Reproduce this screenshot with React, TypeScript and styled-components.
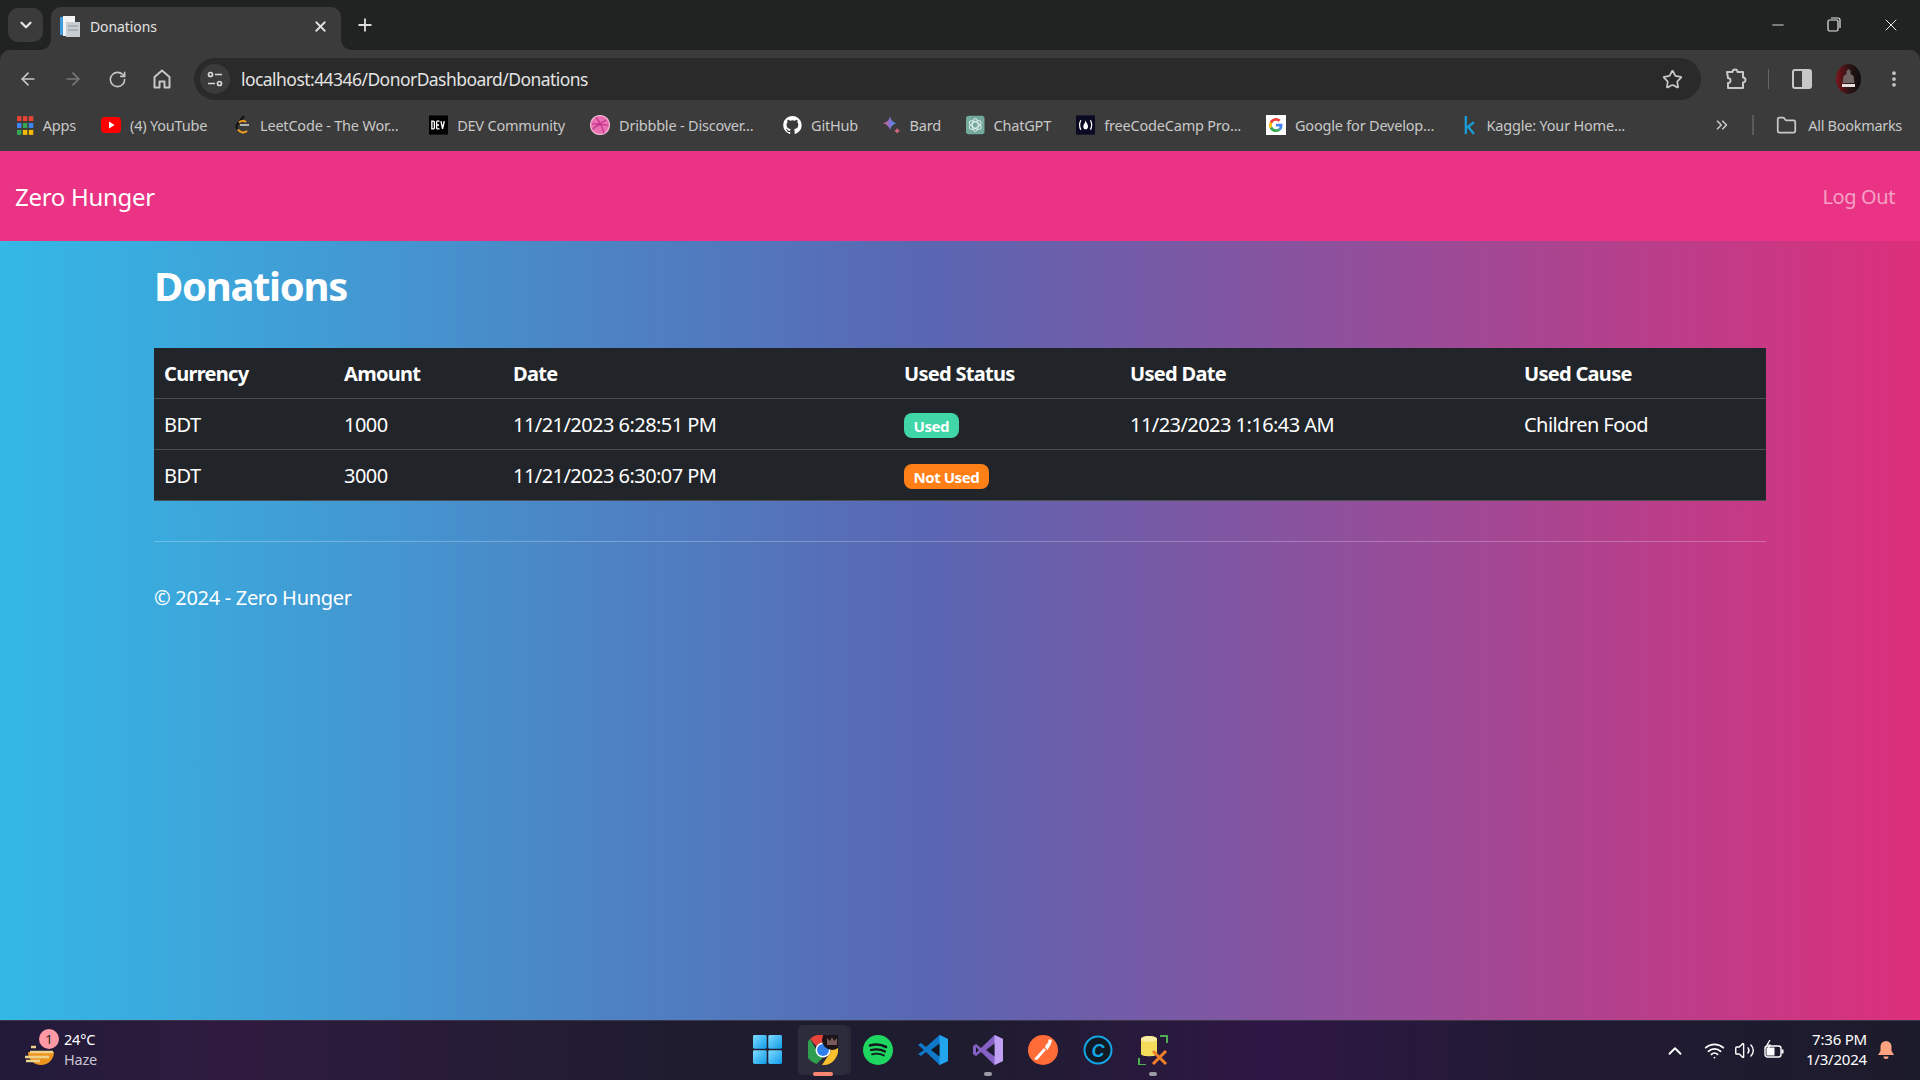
import React from 'react'
import styled, { createGlobalStyle } from 'styled-components'
import {
  ArrowLeft,
  ArrowRight,
  ChevronDown,
  ChevronsRight,
  ChevronUp,
  EllipsisVertical,
  Folder,
  Minus,
  Plus,
  RotateCw,
  Star,
  Volume2,
  Wifi,
  X,
} from 'lucide-react'

const UI_FONT = `'Noto Sans', 'Open Sans', 'Liberation Sans', sans-serif`

const GlobalStyle = createGlobalStyle`
  html, body {
    margin: 0;
    padding: 0;
    background: #212322;
    font-family: ${UI_FONT};
  }
  * { box-sizing: border-box; }
`

const Page = styled.div`
  display: flex;
  flex-direction: column;
  width: 1920px;
  height: 1080px;
  overflow: hidden;
`

/* browser chrome */
const TabStrip = styled.div`
  display: flex;
  align-items: flex-end;
  height: 50px;
  padding-left: 8px;
  background: #212322;
  flex-shrink: 0;
`

const TabSearch = styled.div`
  display: flex;
  align-items: center;
  justify-content: center;
  width: 35px;
  height: 34px;
  margin: 0 8px 8px 0;
  border-radius: 10px;
  background: #3b3b3b;
  color: #e6e6e6;
`

const Tab = styled.div`
  position: relative;
  display: flex;
  align-items: center;
  width: 290px;
  height: 43px;
  padding: 0 12px 4px 9px;
  border-radius: 10px 10px 0 0;
  background: #3b3b3b;
  color: #e3e3e3;
  font-size: 14px;
  letter-spacing: -0.1px;

  &::before,
  &::after {
    content: '';
    position: absolute;
    bottom: 0;
    width: 10px;
    height: 10px;
  }
  &::before {
    left: -10px;
    background: radial-gradient(circle at 0 0, transparent 9.5px, #3b3b3b 10px);
  }
  &::after {
    right: -10px;
    background: radial-gradient(circle at 100% 0, transparent 9.5px, #3b3b3b 10px);
  }
`

const TabTitle = styled.span`
  flex: 1;
  margin-left: 10px;
`

const NewTab = styled.div`
  display: flex;
  align-items: center;
  margin: 0 0 11px 14px;
  height: 28px;
  color: #dedede;
`

const WindowControls = styled.div`
  display: flex;
  align-items: center;
  gap: 38px;
  margin: 0 19px 13px auto;
  height: 24px;
  color: #e8e8e8;
`

const Toolbar = styled.div`
  display: flex;
  align-items: flex-end;
  height: 50px;
  padding-left: 18px;
  background: #3b3b3b;
  border-radius: 10px 10px 0 0;
  flex-shrink: 0;
  color: #c7c7c7;
`

const NavButtons = styled.div`
  display: flex;
  align-items: center;
  gap: 25px;
  height: 42px;
`

const Omnibox = styled.div`
  display: flex;
  align-items: center;
  width: 1507px;
  height: 42px;
  margin-left: 22px;
  padding: 0 18px 0 6px;
  border-radius: 21px;
  background: #2a2a2a;
`

const SiteInfo = styled.div`
  display: flex;
  align-items: center;
  justify-content: center;
  width: 30px;
  height: 30px;
  border-radius: 50%;
  background: #3b3b3b;
`

const Url = styled.span`
  flex: 1;
  margin-left: 11px;
  color: #e3e3e3;
  font-size: 17.5px;
  letter-spacing: -0.55px;
`

const ToolbarEnd = styled.div`
  display: flex;
  align-items: center;
  height: 42px;
  margin-left: 24px;
`

const ToolSep = styled.div`
  width: 1px;
  height: 20px;
  margin: 0 23px 0 21px;
  background: #666;
`

const AvatarSlot = styled.div`
  display: flex;
  margin: 0 23px 0 24px;
`

const BookmarksBar = styled.div`
  display: flex;
  align-items: center;
  height: 51px;
  padding: 0 0 1px 17px;
  background: #3b3b3b;
  flex-shrink: 0;
`

const Bookmark = styled.div<{ $w: number }>`
  display: flex;
  align-items: center;
  gap: 9px;
  width: ${({ $w }) => $w}px;
  flex-shrink: 0;
  margin-right: 25px;
  color: #c8c8c8;
  font-size: 14.5px;
  letter-spacing: -0.2px;
  white-space: nowrap;
`

const BarEnd = styled.div`
  display: flex;
  align-items: center;
  gap: 11px;
  margin-left: auto;
  padding-right: 18px;
  color: #c8c8c8;
  font-size: 14.5px;
  letter-spacing: -0.3px;
`

const BarSep = styled.div`
  width: 2px;
  height: 20px;
  margin: 0 11px 0 10px;
  background: #5a5a5a;
`

/* site */
const SiteNav = styled.nav`
  display: flex;
  align-items: center;
  justify-content: space-between;
  height: 90px;
  padding: 0 25px 0 15px;
  background: #ea3384;
  flex-shrink: 0;
`

const Brand = styled.a`
  color: #fff;
  font-size: 24px;
  letter-spacing: -0.3px;
`

const NavLink = styled.a`
  color: rgba(255, 255, 255, 0.55);
  font-size: 20px;
  letter-spacing: -0.4px;
`

const Main = styled.main`
  flex: 1;
  padding: 0 154px;
  background: linear-gradient(to right, #34b8e6 0%, #5a66b2 48.5%, #8f509c 70%, #dd2f7b 100%);
  color: #fff;
`

const Title = styled.h1`
  margin: 0;
  padding-top: 15px;
  height: 107px;
  font-size: 40px;
  line-height: 60px;
  font-weight: 700;
  letter-spacing: -1.3px;
`

const Table = styled.table`
  width: 100%;
  table-layout: fixed;
  border-collapse: separate;
  border-spacing: 0;
  background: #212529;
  font-size: 20px;
  letter-spacing: -0.55px;
`

const Th = styled.th<{ $w: number }>`
  width: ${({ $w }) => $w}px;
  height: 51px;
  padding: 0 10px;
  text-align: left;
  font-weight: 700;
  letter-spacing: -0.7px;
  border-bottom: 1px solid #4c4f52;
`

const Td = styled.td`
  height: 51px;
  padding: 0 10px;
  border-bottom: 1px solid #4c4f52;
`

const Badge = styled.span<{ $tone: 'used' | 'free' }>`
  display: inline-flex;
  align-items: center;
  height: 25px;
  padding: 0 9.5px;
  margin-top: 3px;
  border-radius: 8px;
  background: ${({ $tone }) => ($tone === 'used' ? '#40d6a6' : '#ff7f17')};
  color: #fff;
  font-size: 15px;
  font-weight: 700;
  letter-spacing: -0.45px;
`

const Rule = styled.hr`
  margin: 40px 0 0;
  border: 0;
  border-top: 1px solid rgba(255, 255, 255, 0.25);
`

const Footer = styled.footer`
  margin-top: 41px;
  font-size: 20px;
  line-height: 30px;
  letter-spacing: -0.3px;
`

/* taskbar */
const Taskbar = styled.div`
  display: grid;
  grid-template-columns: 1fr auto 1fr;
  align-items: center;
  height: 60px;
  flex-shrink: 0;
  border-top: 1px solid #3b3848;
  background: linear-gradient(90deg, #211a38 0%, #2f1b3f 12%, #1f1c30 35%, #1e1c2e 50%, #2f1745 66%, #211a33 80%, #1c1b2b 100%);
  color: #fff;
`

const Weather = styled.div`
  display: flex;
  align-items: center;
  padding-left: 25px;
  gap: 9px;
`

const WeatherIcon = styled.div`
  position: relative;
  width: 30px;
  height: 36px;
`

const WeatherBadge = styled.span`
  position: absolute;
  top: -4px;
  right: -4px;
  width: 20px;
  height: 20px;
  border-radius: 50%;
  background: #ff99a4;
  color: #222;
  font-size: 13px;
  line-height: 20px;
  text-align: center;
`

const WeatherText = styled.div`
  display: flex;
  flex-direction: column;
  padding-bottom: 4px;
  font-size: 14.5px;
  line-height: 20px;
  letter-spacing: -0.2px;
`

const Muted = styled.span`
  color: #c9c5d0;
`

const Apps = styled.div`
  display: flex;
  align-items: center;
  gap: 25px;
  padding-bottom: 2px;
`

const AppSlot = styled.div<{ $active?: boolean }>`
  position: relative;
  display: flex;
  align-items: center;
  justify-content: center;
  width: 30px;
  height: 50px;
  &::before {
    content: '';
    display: ${({ $active }) => ($active ? 'block' : 'none')};
    position: absolute;
    inset: 0 -10px;
    border-radius: 5px;
    background: #2d2c3c;
    box-shadow: 4px 0 0 -1px #292837;
  }
  svg { position: relative; }
`

const RunDot = styled.span<{ $active?: boolean }>`
  position: absolute;
  bottom: -1px;
  left: 50%;
  width: ${({ $active }) => ($active ? 20 : 8)}px;
  height: 4px;
  transform: translateX(-50%);
  border-radius: 2px;
  background: ${({ $active }) => ($active ? '#f98673' : '#9d9ba5')};
`

const Tray = styled.div`
  display: flex;
  align-items: center;
  justify-content: flex-end;
  padding-right: 26px;
`

const TrayIcons = styled.div`
  display: flex;
  align-items: center;
  gap: 9px;
  margin-right: 22px;
`

const TrayChevron = styled.span`
  display: flex;
  margin-right: 9px;
`

const Clock = styled.div`
  display: flex;
  flex-direction: column;
  align-items: flex-end;
  margin-right: 11px;
  padding-bottom: 4px;
  font-size: 15px;
  line-height: 20px;
  letter-spacing: -0.2px;
`

const HomeIcon = () => (
  <svg width="20" height="22" viewBox="0 0 20 22" fill="none" stroke="currentColor" strokeWidth="2">
    <path d="M2.5 9 10 2.5 17.5 9v10.5h-5v-6h-5v6h-5z" strokeLinejoin="round" />
  </svg>
)

const TuneIcon = () => (
  <svg width="18" height="18" viewBox="0 0 18 18" fill="none" stroke="#d8d8d8" strokeWidth="1.7">
    <circle cx="4.5" cy="4.5" r="2" />
    <path d="M9 4.5h7M2 13.5h7" />
    <circle cx="13.5" cy="13.5" r="2" />
  </svg>
)

const PuzzleIcon = () => (
  <svg width="22" height="24" viewBox="0 0 22 24" fill="none" stroke="#c7c7c7" strokeWidth="2" strokeLinejoin="round">
    <path d="M2 5h5.5a2.5 2.5 0 0 1 5 0H18v5.5a2.5 2.5 0 0 1 0 5V21H3v-5a2.5 2.5 0 0 0 0-5z" />
  </svg>
)

const SidePanelIcon = () => (
  <svg width="20" height="22" viewBox="0 0 20 22">
    <rect x="1" y="2" width="18" height="18" rx="2" fill="none" stroke="#c7c7c7" strokeWidth="2" />
    <rect x="10" y="2" width="9" height="18" fill="#c7c7c7" />
  </svg>
)

const AvatarIcon = () => (
  <svg width="25" height="30" viewBox="0 0 25 30">
    <defs>
      <linearGradient id="avatar" x1="0" x2="1">
        <stop offset="0" stopColor="#7a1418" />
        <stop offset="0.55" stopColor="#2a1416" />
        <stop offset="1" stopColor="#0f0c0c" />
      </linearGradient>
    </defs>
    <ellipse cx="12.5" cy="15" rx="12.5" ry="15" fill="url(#avatar)" />
    <path d="M12.500 5l2 2v3l3 2 1 7h-12l1-7 3-2V7z" fill="#6f6462" />
    <rect x="6" y="20" width="13" height="3" fill="#e4e0dc" />
  </svg>
)

const DocFavicon = () => (
  <svg width="20" height="22" viewBox="0 0 20 22">
    <rect x="0" y="1" width="4" height="18" fill="#3f9bdc" />
    <rect x="3" y="0" width="12" height="20" fill="#f3f3f3" />
    <rect x="6" y="6" width="14" height="15" fill="#c9ced3" />
    <path d="M8 10h10M8 14h10" stroke="#8d949b" strokeWidth="1" />
  </svg>
)

const AppsGrid = () => (
  <svg width="17" height="19" viewBox="0 0 17 19">
    {['#ea4335', '#ea4335', '#ea4335', '#4285f4', '#34a853', '#4285f4', '#34a853', '#fbbc04', '#fbbc04'].map((c, i) => (
      <rect key={i} x={(i % 3) * 6} y={Math.floor(i / 3) * 7} width="4.5" height="5" fill={c} />
    ))}
  </svg>
)

const YoutubeIcon = () => (
  <svg width="20" height="16" viewBox="0 0 20 16">
    <rect width="20" height="16" rx="4" fill="#f00" />
    <path d="M8 4.5v7l5.5-3.5z" fill="#fff" />
  </svg>
)

const LeetcodeIcon = () => (
  <svg width="16" height="20" viewBox="0 0 16 20" fill="none" strokeWidth="2">
    <path d="M9 1 2.5 9a3.5 3.5 0 0 0 0 5" stroke="#111" />
    <path d="M5 10h9" stroke="#b3b3b3" />
    <path d="M3 14.5c2.5 3.5 6 4 9 1.5" stroke="#f89f1b" />
    <path d="M4 7.5c2-2 5-2 7-.5" stroke="#f89f1b" />
  </svg>
)

const DevIcon = () => (
  <svg width="20" height="20" viewBox="0 0 20 20">
    <rect width="20" height="20" fill="#000" />
    <path d="M3 6h1.6q1 0 1 1v6q0 1-1 1H3zM8 6h3M8 10h2.5M8 14h3M8 6v8M12.5 6l1.7 8 1.8-8" fill="none" stroke="#fff" strokeWidth="1.4" />
  </svg>
)

const DribbbleIcon = () => (
  <svg width="20" height="20" viewBox="0 0 20 20" fill="none" stroke="#c2358b" strokeWidth="1.2">
    <circle cx="10" cy="10" r="9.5" fill="#ea6fb0" stroke="#f3b6d6" />
    <path d="M6 2.5c3.5 4 6.5 10 8 16M2 9c5 .5 10-.5 14-4M2.5 14.5c3-4 9-6 16-4" />
  </svg>
)

const GithubIcon = () => (
  <svg width="20" height="20" viewBox="0 0 24 24" fill="#fff">
    <path d="M12 .5a11.7 11.7 0 0 0-3.7 22.8c.6.1.8-.3.8-.6v-2c-3.300.7-4-1.600-4-1.600-.5-1.300-1.300-1.700-1.300-1.700-1-.7.1-.7.1-.7 1.200.1 1.800 1.200 1.800 1.200 1 1.800 2.700 1.300 3.400 1 .1-.8.4-1.300.8-1.600-2.600-.3-5.400-1.300-5.400-5.800 0-1.300.5-2.300 1.200-3.100-.1-.3-.5-1.500.1-3.100 0 0 1-.3 3.200 1.200a11 11 0 0 1 5.800 0c2.200-1.500 3.200-1.200 3.200-1.200.6 1.600.2 2.800.1 3.100.8.8 1.200 1.900 1.200 3.100 0 4.500-2.700 5.500-5.400 5.800.4.400.8 1.100.8 2.200v3.200c0 .3.2.7.8.6A11.700 11.700 0 0 0 12 .5z" />
  </svg>
)

const BardIcon = () => (
  <svg width="20" height="20" viewBox="0 0 20 20">
    <defs>
      <linearGradient id="bard" x1="0" x2="1">
        <stop offset="0" stopColor="#e0606a" />
        <stop offset="0.5" stopColor="#8a6fd0" />
        <stop offset="1" stopColor="#3f9be8" />
      </linearGradient>
    </defs>
    <path d="M8 0q1 6 7 8-6 2-7 8-1-6-8-8 7-2 8-8z" fill="url(#bard)" />
    <path d="M16 13q.4 2.600 3.500 3.500-3.100.9-3.500 3.500-.4-2.600-3.500-3.500 3.100-.9 3.500-3.500z" fill="#d9647f" />
  </svg>
)

const ChatGptIcon = () => (
  <svg width="20" height="20" viewBox="0 0 20 20">
    <rect width="20" height="20" rx="3" fill="#74aa9c" />
    <g fill="none" stroke="#e8f3f0" strokeWidth="1">
      <ellipse cx="10" cy="10" rx="3.200" ry="7" />
      <ellipse cx="10" cy="10" rx="3.200" ry="7" transform="rotate(60 10 10)" />
      <ellipse cx="10" cy="10" rx="3.200" ry="7" transform="rotate(120 10 10)" />
    </g>
  </svg>
)

const FccIcon = () => (
  <svg width="20" height="20" viewBox="0 0 20 20" fill="none" stroke="#fff" strokeWidth="1.300">
    <rect width="20" height="20" fill="#0a0a23" stroke="none" />
    <path d="M5 5q-2.500 5 0 10M15 5q2.500 5 0 10" />
    <path d="M10 5c.5 2.500 2.500 4 2.500 6.500 0 2-1.500 3-2.500 3s-2.500-1-2.500-3c0-2 2-3.500 2.500-6.500z" fill="#fff" stroke="none" />
  </svg>
)

const GoogleIcon = () => (
  <svg width="20" height="20" viewBox="0 0 20 20">
    <rect width="20" height="20" fill="#fff" />
    <path d="M16.500 10.200c0-.5 0-1-.1-1.400H10v2.700h3.700a3.200 3.200 0 0 1-1.400 2.100l2.200 1.700c1.300-1.200 2-3 2-5.100z" fill="#4285f4" />
    <path d="M10 17c1.900 0 3.400-.6 4.500-1.700l-2.200-1.700c-.6.400-1.400.7-2.300.7-1.800 0-3.300-1.200-3.900-2.800l-2.300 1.800A7 7 0 0 0 10 17z" fill="#34a853" />
    <path d="M6.100 11.500a4.200 4.200 0 0 1 0-2.900L3.800 6.800a7 7 0 0 0 0 6.500z" fill="#fbbc04" />
    <path d="M10 5.800c1 0 1.900.4 2.600 1l2-2A7 7 0 0 0 3.800 6.800l2.300 1.800C6.700 7 8.200 5.800 10 5.800z" fill="#ea4335" />
  </svg>
)

const KaggleIcon = () => (
  <svg width="15" height="20" viewBox="0 0 15 20" fill="none" stroke="#1b9bd1" strokeWidth="2.600">
    <path d="M2 0v20M11 7l-8 6M4 11l7 9" />
  </svg>
)

const WinIcon = () => (
  <svg width="29" height="29" viewBox="0 0 30 30">
    <defs>
      <linearGradient id="win" x1="0" y1="0" x2="1" y2="1">
        <stop offset="0" stopColor="#7fdcff" />
        <stop offset="1" stopColor="#0f9be8" />
      </linearGradient>
    </defs>
    <rect x="0" y="0" width="14.200" height="14.200" rx="1.500" fill="url(#win)" />
    <rect x="15.800" y="0" width="14.200" height="14.200" rx="1.500" fill="url(#win)" />
    <rect x="0" y="15.800" width="14.200" height="14.200" rx="1.500" fill="url(#win)" />
    <rect x="15.800" y="15.800" width="14.200" height="14.200" rx="1.500" fill="url(#win)" />
  </svg>
)

const ChromeIcon = () => (
  <svg width="30" height="30" viewBox="0 0 30 30">
    <path d="M15 0a15 15 0 0 1 13 7.500H15a7.500 7.500 0 0 0-6.500 3.750L2 3.900A15 15 0 0 1 15 0z" fill="#e8433a" />
    <path d="M2 3.900l6.500 11.100A7.500 7.500 0 0 0 15 22.500L8.500 29A15 15 0 0 1 2 3.900z" fill="#2f9e4f" />
    <path d="M28 7.500A15 15 0 0 1 14 30l7.500-11.250A7.500 7.500 0 0 0 21.500 11z" fill="#fbc02d" />
    <circle cx="15" cy="15" r="7.500" fill="#fff" />
    <circle cx="15" cy="15" r="6" fill="#2f80ed" />
    <circle cx="24" cy="5" r="10" fill="#1b1416" />
    <path d="M19 10V3l3 3 2-4 2 4 3-3v7z" fill="#7a5a5a" />
  </svg>
)

const SpotifyIcon = () => (
  <svg width="30" height="30" viewBox="0 0 30 30" fill="none" stroke="#14151f" strokeLinecap="round">
    <circle cx="15" cy="15" r="15" fill="#1ed760" stroke="none" />
    <path d="M7 10.500c5.500-1.500 11.500-1 16 1.500" strokeWidth="2.600" />
    <path d="M8 15c5-1.200 10-.8 14 1.500" strokeWidth="2.200" />
    <path d="M9 19.300c4-1 8.500-.7 12 1.200" strokeWidth="1.800" />
  </svg>
)

const VsCodeIcon = () => (
  <svg width="30" height="30" viewBox="0 0 30 30">
    <path d="M21.500 0 30 4v22l-8.500 4L8 17l-5 4-3-2 6-4-6-5 3-2 5 4z" fill="#0f78c8" />
    <path d="M21.500 0 30 4v22l-8.500 4z" fill="#23a5ee" />
    <path d="M21.500 8.500v13L13 15z" fill="#14151f" />
  </svg>
)

const VisualStudioIcon = () => (
  <svg width="30" height="30" viewBox="0 0 30 30">
    <path d="M21.500 0 30 4v22l-8.500 4L8 17l-5 4-3-2V11l3-2 5 4z" fill="#8661c5" />
    <path d="M21.500 0 30 4v22l-8.500 4z" fill="#c0a0f2" />
    <path d="M21.500 8.500v13L13 15zM3 12v6l3-3z" fill="#1d1b2d" />
  </svg>
)

const PostmanIcon = () => (
  <svg width="30" height="30" viewBox="0 0 30 30">
    <circle cx="15" cy="15" r="15" fill="#ff6c37" />
    <path d="M6 24 16 13l2 2-9 10zM17 12.500c0-2 2-4 3-5l2-2 1.500 1.500-1 3-3 5z" fill="#fff" />
    <circle cx="22" cy="6" r="1.800" fill="#fff" />
  </svg>
)

const CCleanerIcon = () => (
  <svg width="30" height="30" viewBox="0 0 30 30">
    <circle cx="15" cy="15" r="13.500" fill="#111a24" stroke="#14a5e6" strokeWidth="2" />
    <text x="15" y="21.500" textAnchor="middle" fill="#14a5e6" fontSize="18" fontWeight="700" fontStyle="italic" fontFamily="'Liberation Sans', sans-serif">C</text>
  </svg>
)

const DbToolIcon = () => (
  <svg width="30" height="30" viewBox="0 0 30 30" fill="none">
    <path d="M22 1h7v7M1 23v7h7" stroke="#4caf50" strokeWidth="2" />
    <path d="M3 4c0-4 16-4 16 0v15c0 3-16 3-16 0z" fill="#f5dc5a" />
    <ellipse cx="11" cy="4" rx="8" ry="3" fill="#f9eda3" />
    <path d="M15 16l13 13M28 16 15 29" stroke="#f07f2b" strokeWidth="3" />
  </svg>
)

const WeatherGlyph = () => (
  <svg width="30" height="36" viewBox="0 0 30 36">
    <path d="M4 20a13 13 0 0 0 26 0z" fill="#ef9320" transform="translate(-1 -1)" />
    <path d="M6 14h5M5 19h23M0 24h24M1 28h14" stroke="#eed38a" strokeWidth="2.500" />
  </svg>
)

const BatteryIcon = () => (
  <svg width="20" height="22" viewBox="0 0 20 22" fill="none" stroke="#fff" strokeWidth="1.400">
    <rect x="1" y="6" width="16" height="11" rx="2.500" />
    <rect x="2.500" y="7.500" width="8" height="8" fill="#fff" stroke="none" />
    <path d="M18.500 9.500v4" strokeWidth="2" />
    <path d="M6 0 3 5h3l-2 4" strokeWidth="1.200" />
  </svg>
)

const BellIcon = () => (
  <svg width="16" height="20" viewBox="0 0 16 20" fill="#ffa27f">
    <path d="M8 0a5.500 5.500 0 0 1 5.500 5.500V10L16 14H0l2.500-4V5.500A5.500 5.500 0 0 1 8 0z" />
    <path d="M5.500 15.500h5a2.500 2.500 0 0 1-5 0z" />
  </svg>
)

const bookmarks: { label: string; w: number; icon: React.ReactNode }[] = [
  { label: 'Apps', w: 59, icon: <AppsGrid /> },
  { label: '(4) YouTube', w: 109, icon: <YoutubeIcon /> },
  { label: 'LeetCode - The Wor...', w: 169, icon: <LeetcodeIcon /> },
  { label: 'DEV Community', w: 136, icon: <DevIcon /> },
  { label: 'Dribbble - Discover...', w: 168, icon: <DribbbleIcon /> },
  { label: 'GitHub', w: 75, icon: <GithubIcon /> },
  { label: 'Bard', w: 58, icon: <BardIcon /> },
  { label: 'ChatGPT', w: 85, icon: <ChatGptIcon /> },
  { label: 'freeCodeCamp Pro...', w: 165, icon: <FccIcon /> },
  { label: 'Google for Develop...', w: 173, icon: <GoogleIcon /> },
  { label: 'Kaggle: Your Home...', w: 161, icon: <KaggleIcon /> },
]

const columns = [
  { title: 'Currency', w: 180 },
  { title: 'Amount', w: 169 },
  { title: 'Date', w: 391 },
  { title: 'Used Status', w: 226 },
  { title: 'Used Date', w: 394 },
  { title: 'Used Cause', w: 252 },
]

const donations = [
  { currency: 'BDT', amount: 1000, date: '11/21/2023 6:28:51 PM', used: true, usedDate: '11/23/2023 1:16:43 AM', cause: 'Children Food' },
  { currency: 'BDT', amount: 3000, date: '11/21/2023 6:30:07 PM', used: false, usedDate: '', cause: '' },
]

const taskApps = [
  { icon: <ChromeIcon />, active: true, dot: true },
  { icon: <SpotifyIcon /> },
  { icon: <VsCodeIcon /> },
  { icon: <VisualStudioIcon />, dot: true },
  { icon: <PostmanIcon /> },
  { icon: <CCleanerIcon /> },
  { icon: <DbToolIcon />, dot: true },
]

export default function App() {
  return (
    <Page>
      <GlobalStyle />
      <TabStrip>
        <TabSearch>
          <ChevronDown size={18} strokeWidth={3} />
        </TabSearch>
        <Tab>
          <DocFavicon />
          <TabTitle>Donations</TabTitle>
          <X size={17} strokeWidth={2.5} />
        </Tab>
        <NewTab>
          <Plus size={20} strokeWidth={2.2} />
        </NewTab>
        <WindowControls>
          <Minus size={18} strokeWidth={1.2} />
          <svg width="18" height="18" viewBox="0 0 18 18" fill="none" stroke="currentColor" strokeWidth="1.200">
            <rect x="3" y="4" width="10" height="11" rx="1.500" />
            <path d="M6 2h7a2 2 0 0 1 2 2v8" />
          </svg>
          <X size={20} strokeWidth={1.2} />
        </WindowControls>
      </TabStrip>

      <Toolbar>
        <NavButtons>
          <ArrowLeft size={20} strokeWidth={2} />
          <ArrowRight size={20} strokeWidth={2} color="#787878" />
          <RotateCw size={19} strokeWidth={2} />
          <HomeIcon />
        </NavButtons>
        <Omnibox>
          <SiteInfo>
            <TuneIcon />
          </SiteInfo>
          <Url>localhost:44346/DonorDashboard/Donations</Url>
          <Star size={21} strokeWidth={2} />
        </Omnibox>
        <ToolbarEnd>
          <PuzzleIcon />
          <ToolSep />
          <SidePanelIcon />
          <AvatarSlot>
            <AvatarIcon />
          </AvatarSlot>
          <EllipsisVertical size={20} strokeWidth={2.5} />
        </ToolbarEnd>
      </Toolbar>

      <BookmarksBar>
        {bookmarks.map(b => (
          <Bookmark key={b.label} $w={b.w}>
            {b.icon}
            {b.label}
          </Bookmark>
        ))}
        <BarEnd>
          <ChevronsRight size={18} strokeWidth={2.2} />
          <BarSep />
          <Folder size={21} strokeWidth={2} />
          <span>All Bookmarks</span>
        </BarEnd>
      </BookmarksBar>

      <SiteNav>
        <Brand>Zero Hunger</Brand>
        <NavLink>Log Out</NavLink>
      </SiteNav>

      <Main>
        <Title>Donations</Title>
        <Table>
          <thead>
            <tr>
              {columns.map(c => (
                <Th key={c.title} $w={c.w}>
                  {c.title}
                </Th>
              ))}
            </tr>
          </thead>
          <tbody>
            {donations.map(d => (
              <tr key={d.date}>
                <Td>{d.currency}</Td>
                <Td>{d.amount}</Td>
                <Td>{d.date}</Td>
                <Td>
                  <Badge $tone={d.used ? 'used' : 'free'}>{d.used ? 'Used' : 'Not Used'}</Badge>
                </Td>
                <Td>{d.usedDate}</Td>
                <Td>{d.cause}</Td>
              </tr>
            ))}
          </tbody>
        </Table>
        <Rule />
        <Footer>© 2024 - Zero Hunger</Footer>
      </Main>

      <Taskbar>
        <Weather>
          <WeatherIcon>
            <WeatherGlyph />
            <WeatherBadge>1</WeatherBadge>
          </WeatherIcon>
          <WeatherText>
            <span>24°C</span>
            <Muted>Haze</Muted>
          </WeatherText>
        </Weather>
        <Apps>
          <AppSlot>
            <WinIcon />
          </AppSlot>
          {taskApps.map((a, i) => (
            <AppSlot key={i} $active={a.active}>
              {a.icon}
              {a.dot && <RunDot $active={a.active} />}
            </AppSlot>
          ))}
        </Apps>
        <Tray>
          <TrayIcons>
            <TrayChevron>
              <ChevronUp size={22} strokeWidth={2} />
            </TrayChevron>
            <Wifi size={21} strokeWidth={2} />
            <Volume2 size={21} strokeWidth={1.6} />
            <BatteryIcon />
          </TrayIcons>
          <Clock>
            <span>7:36 PM</span>
            <span>1/3/2024</span>
          </Clock>
          <BellIcon />
        </Tray>
      </Taskbar>
    </Page>
  )
}
